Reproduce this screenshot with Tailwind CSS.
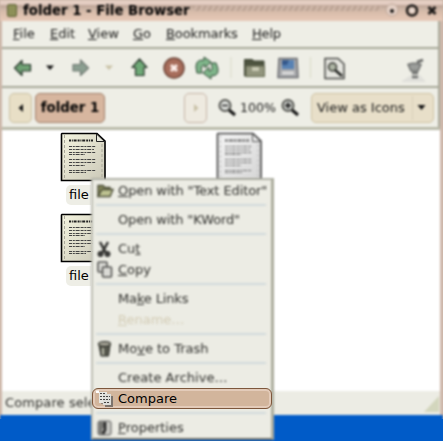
<!DOCTYPE html>
<html lang="en">
<head>
<meta charset="utf-8">
<title>folder 1 - File Browser</title>
<script src="https://cdn.jsdelivr.net/npm/@tailwindcss/browser@4"></script>
</head>
<body class="w-[443px] h-[441px] overflow-hidden bg-[#c9b5a6] text-[13px] font-['DejaVu_Sans',sans-serif] text-[#191918]">
<svg class="absolute w-0 h-0">
  <defs>
    <linearGradient id="paper" x1="0" y1="0" x2="1" y2="1"><stop offset="0" stop-color="#f4f4df"/><stop offset="1" stop-color="#cbc8b8"/></linearGradient>
    <symbol id="doc" viewBox="0 0 46 50">
      <path d="M2 1.500H37L45 9V48.500H1.500V2Z" fill="url(#paper)" stroke="#000" stroke-width="1.600"/>
      <path d="M4.500 3V47M42 12V47" stroke="#aaa99b" stroke-dasharray="3 2"/>
      <path d="M36.500 2V9.500H44.500Z" fill="#e8e8dc" stroke="#222" stroke-width="1"/>
      <path d="M9 8.500H33" stroke="#222" stroke-width="2" stroke-dasharray="2 .8 1 .8 3 1"/>
      <path d="M9 14.500H36M9 17.500H34M9 20.500H36M9 22.500H25M9 27.500H36M9 30.500H36M9 33.500H25M9 38.500H36M9 40.500H26" stroke="#444" stroke-dasharray="3 .8 2 .8 4 1"/>
    </symbol>
  </defs>
</svg>
<div class="relative w-[443px] h-[441px] overflow-hidden">
  <!-- browser window -->
  <div class="flex flex-col w-[443px] h-[441px] blur-[1.3px]">
    <header class="h-[21px] shrink-0 flex items-center bg-[linear-gradient(#dfc9bd_0,#e9d3c8_4px,#b9a092_6px,#c9b3a4_8px,#d8bcaa_12px,#e6c8b6_20px)]">
      <div class="ml-[7px] w-[10px] h-[13px] rounded-xs bg-[#8d9058] border border-[#5d6035]"></div>
      <div class="ml-[6px] w-[170px] font-bold text-[13.300px] leading-5 whitespace-nowrap text-black">folder 1 - File Browser</div>
      <div class="flex-1 h-[5px] -mt-1 bg-[repeating-linear-gradient(120deg,#b9a192_0_2px,#cdb5a6_2px_5px)]"></div>
      <svg class="w-[62px] h-[21px]" fill="none" stroke="#1d1a18"><circle cx="11" cy="10" r="6" stroke="#bca596" fill="#e3cfc4"/><circle cx="11" cy="11" r="1.500" fill="#111"/><circle cx="31" cy="10.500" r="5" stroke-width="2.500"/><circle cx="31" cy="10.500" r="2.500" fill="#eadbd2" stroke="none"/><path d="M47.500 7L54.500 14M54.500 7L47.500 14" stroke-width="2.800"/></svg>
    </header>
    <div class="h-[394px] shrink-0 flex flex-col border-l-2 border-l-[#cdb7aa] border-r-3 border-r-[#cfb9ac] bg-[#eeeee6]">
      <nav class="h-[26px] pl-[11px] flex items-center border-r-2 border-[#a9aa9b] leading-[28px]">
        <span class="w-[37px]"><u>F</u>ile</span><span class="w-[38px]"><u>E</u>dit</span><span class="w-[45px]"><u>V</u>iew</span><span class="w-[33px]"><u>G</u>o</span><span class="w-[86px] tracking-[-0.1px]"><u>B</u>ookmarks</span><span class="tracking-[-0.2px]"><u>H</u>elp</span>
      </nav>
      <div class="h-[39px] border-t-2 border-t-[#a6a797] border-r-2 border-r-[#a9aa9b]">
        <svg class="w-[438px] h-[38px]" viewBox="2 49 438 38" fill="none">
          <g stroke="#27352a" stroke-width="1.200" stroke-linejoin="round">
            <path d="M14.500 68L22 60.500V64.500H30.500V71H22V75.500Z" fill="#6fa174"/>
            <path d="M88.500 68L80.500 60V64.500H73V71H80.500V75.500Z" fill="#8b9f91" stroke="#717a73"/>
            <path d="M139.500 59L147 67.500H144V75.500H135.500V67.500H132Z" fill="#6fa977"/>
          </g>
          <path d="M46 65.500H54L50 70Z" fill="#111"/><path d="M105 65.500H113L109 70Z" fill="#c9c2a6"/>
          <circle cx="174" cy="68" r="10" fill="#a76d5b" stroke="#6f4639" stroke-width="1.500"/>
          <path d="M171 65L177 71M177 65L171 71" stroke="#fff1ed" stroke-width="3"/>
          <g stroke-linejoin="round" stroke="#2f4a35" fill="#7fb58a"><path d="M197 73Q193 59 204 60V57L211 62L205 68V65Q200 65 202 73Z"/>
          <path d="M216 63Q222 76 211 76V79L203 73L209 67V71Q214 71 211 63Z"/></g>
          <path d="M231 57V78M310.500 57V78" stroke="#d9dbc6"/>
          <path d="M244.500 76V59.500H252L254 61H264V76.500Z" fill="#4d533f" stroke="#3a402f"/>
          <path d="M246 66H264.500V76.500H246Z" fill="#92957d" stroke="#666b52"/><path d="M252 67H259V71H252Z" fill="#c9c9b4"/>
          <path d="M279 58.500H297L298 77.500H278Z" fill="#a6a7aa" stroke="#6e6f73" stroke-width="1.500"/><path d="M282 60H294V69H282Z" fill="#5882b4"/><path d="M282 60H289L287 65H282Z" fill="#35598c"/><path d="M282 73H294" stroke="#ddd" stroke-width="3"/>
          <path d="M325 58.500H338L344 64V78.500H325Z" fill="#e5e5df" stroke="#4b4c49" stroke-width="1.500"/><circle cx="332.500" cy="67" r="4" fill="#aeb5a5" stroke="#393a35" stroke-width="1.500"/><path d="M335 70L342 76" stroke="#20211e" stroke-width="2.500"/>
          <path d="M402 81L411 75H420L426 82H402Z" fill="#e0e0db"/>
          <path d="M408 64.500Q414 62 421 64.500L418 71H411Z" fill="#9b9d9a" stroke="#6f716f" stroke-width="1.500"/><path d="M417 62L423 60" stroke="#626462" stroke-width="2.500"/><path d="M412 73H418M412 77H418" stroke="#6f716f" stroke-width="2.500"/>
        </svg>
      </div>
      <div class="h-[41px] flex items-center pt-px pl-[7px] border-t-2 border-t-[#a6a797] border-r-2 border-r-[#a9aa9b]">
        <div class="w-[23px] h-[30px] rounded-[5px] border border-[#cbc1a4] bg-[#e8dfc6] flex items-center justify-center"><svg class="w-2 h-2"><path d="M6 0V8L1.500 4Z" fill="#111"/></svg></div>
        <div class="ml-[3px] w-[70px] h-[30px] rounded-[5px] border border-[#a07f6a] bg-[#d7b69f] flex items-center justify-center font-bold text-black whitespace-nowrap text-[13.300px]">folder 1</div>
        <div class="ml-[79px] w-[23px] h-[30px] rounded-[5px] border border-[#c8b5a8] bg-[#eeeae0] flex items-center justify-center"><svg class="w-2 h-2"><path d="M2 0V8L6.500 4Z" fill="#c8c0a6"/></svg></div>
        <svg class="ml-[10px] w-[20px] h-[20px]" fill="none"><circle cx="8" cy="7.500" r="5.500" fill="#dfe1dd" stroke="#555651" stroke-width="2"/><path d="M5 7.500H11" stroke="#222" stroke-width="1.500"/><path d="M12 12L18 17" stroke="#151515" stroke-width="3"/></svg>
        <span class="ml-[3px] w-[40px] text-[12.600px]">100%</span>
        <svg class="w-[20px] h-[20px]" fill="none"><circle cx="8" cy="7.500" r="5.500" fill="#d2d4d0" stroke="#555651" stroke-width="2"/><path d="M5 7.500H11M8 4.500V10.500" stroke="#222" stroke-width="1.800"/><path d="M12 12L18 17" stroke="#151515" stroke-width="3"/></svg>
        <div class="ml-[11px] w-[123px] h-[30px] rounded-[5px] border border-[#cfc3a3] bg-[#e8dfc9] flex items-center pl-[5px] whitespace-nowrap"><span class="w-[95px]">View as Icons</span><i class="w-px h-[24px] bg-[#d8cfb9]"></i><svg class="ml-[3px] w-3 h-3"><path d="M1.500 3H9.500L5.500 8Z" fill="#151515"/></svg></div>
      </div>
      <main class="h-[264px] bg-white border-t-3 border-[#b9baa9]"></main>
      <footer class="h-[24px] shrink-0 flex items-center justify-between bg-[#ecece4] pl-[3px] text-[#30302d]"><span class="tracking-[0.1px]">Compare sele</span><svg class="w-[16px] h-[24px]"><path d="M0 21L15 5V21Z" fill="#d3d6bd"/></svg></footer>
    </div>
    <div class="h-[26px] shrink-0 bg-[#005bc8]"></div>
  </div>
  <div class="absolute left-0 right-0 bottom-0 h-[22px] bg-[#005bc8]"></div>

  <!-- files on the icon canvas -->
  <svg class="absolute left-[60px] top-[132px] w-[46px] h-[50px]"><use href="#doc"/></svg>
  <div class="absolute left-[66px] top-[185px] w-[25px] h-5 rounded-l-[5px] bg-[#eeeee6] pl-[3px] leading-5 text-black">file</div>
  <svg class="absolute left-[60px] top-[213px] w-[46px] h-[50px]"><use href="#doc"/></svg>
  <div class="absolute left-[66px] top-[266px] w-[25px] h-5 rounded-l-[5px] bg-[#eeeee6] pl-[3px] leading-5 text-black">file</div>
  <svg class="absolute left-[215px] top-[132px] w-[48px] h-[50px] blur-[1.300px] grayscale opacity-75"><use href="#doc"/></svg>

  <!-- context menu -->
  <div class="absolute left-[91px] top-[178px] w-[183px] h-[262px]">
    <div class="absolute inset-0 bg-[#ecece4] border-2 border-t-[#b0b1a6] border-l-[#bdbeb3] border-r-3 border-r-[#acad9d] border-b-[#73746a] blur-[1px]"></div>
    <div class="relative pt-[2px] pl-[5px] pr-[3px] whitespace-nowrap text-[#30302d]">
      <div class="h-[21px] flex items-center blur-[1.3px]"><svg class="w-[22px] h-[20px]"><path d="M2 16V4.500H7L9 6.500H14V9" fill="#85885b" stroke="#4b4d38" stroke-width="1.400"/><path d="M2 15.500L6 8.500H17L14 15.500Z" fill="#bdc291" stroke="#4b4d38" stroke-width="1.400"/></svg><span class="tracking-[-0.1px]"><u>O</u>pen with "Text Editor"</span></div>
      <div class="h-[8px] w-[170px] pt-[3px] blur-[1px]"><div class="h-[2px] bg-[#d2dadb]"></div></div>
      <div class="h-[21px] flex items-center pl-[22px] tracking-[-0.12px] blur-[1.3px]">Open with "KWord"</div>
      <div class="h-[8px] w-[170px] pt-[3px] blur-[1px]"><div class="h-[2px] bg-[#d2dadb]"></div></div>
      <div class="h-[21px] flex items-center blur-[1.3px]"><svg class="w-[22px] h-[20px]" fill="none" stroke="#30302e" stroke-width="2.500"><path d="M4 3L10 14M12 3L6 14"/><circle cx="4.500" cy="15" r="1.700"/><circle cx="11.500" cy="15" r="1.700"/></svg><span>Cu<u>t</u></span></div>
      <div class="h-[21px] flex items-center blur-[1.3px]"><svg class="w-[22px] h-[20px]" fill="#dadad5" stroke="#565654" stroke-width="1.600"><rect x="2" y="2" width="9" height="10" rx="1"/><rect x="6.500" y="7" width="9" height="10" rx="1"/></svg><span><u>C</u>opy</span></div>
      <div class="h-[8px] w-[170px] pt-[3px] blur-[1px]"><div class="h-[2px] bg-[#d2dadb]"></div></div>
      <div class="h-[21px] flex items-center pl-[22px] tracking-[-0.15px] blur-[1.3px]"><span>Ma<u>k</u>e Links</span></div>
      <div class="h-[21px] flex items-center pl-[22px] text-[#d3ccb5] blur-[1.3px]"><span><u>R</u>ename…</span></div>
      <div class="h-[8px] w-[170px] pt-[3px] blur-[1px]"><div class="h-[2px] bg-[#d2dadb]"></div></div>
      <div class="h-[21px] flex items-center blur-[1.3px]"><svg class="w-[22px] h-[20px]"><path d="M3 6H14L12.500 17H5Z" fill="#55564b" stroke="#292a24"/><ellipse cx="8.500" cy="5" rx="6" ry="2.300" fill="#aaa89a" stroke="#30312a" stroke-width="1.300"/><path d="M7 9V16" stroke="#b9b9a9" stroke-width="2"/></svg><span>Mo<u>v</u>e to Trash</span></div>
      <div class="h-[8px] w-[170px] pt-[3px] blur-[1px]"><div class="h-[2px] bg-[#d2dadb]"></div></div>
      <div class="h-[21px] flex items-center pl-[22px] tracking-[0.04px] blur-[1.3px]">Create Archive…</div>
      <div class="h-[21px] -ml-[4px] w-[180px] flex items-center pl-[3px] rounded-[6px] border border-[#7d573c] bg-[#d2b59c] shadow-[inset_0_0_0_2px_#e3cbb9] text-black"><svg class="w-[22px] h-[19px]"><path d="M5 5H12V15H5Z" fill="#8b8078"/><path d="M9 7H17V18H9Z" fill="#7d746d"/><path d="M0 1.500H3V4H0Z" fill="#fff"/><path d="M3 3H11V14H3Z" fill="#e7e7e2"/><path d="M7 5H15V16H7Z" fill="#dededa"/><path d="M4 4.500H10M4 7.500H14M4 10.500H14M8 13.500H14" stroke="#444" stroke-dasharray="2 1"/></svg><span>Compare</span></div>
      <div class="h-[8px] w-[170px] pt-[3px] blur-[1px]"><div class="h-[2px] bg-[#d2dadb]"></div></div>
      <div class="h-[21px] flex items-center blur-[1.3px]"><svg class="w-[22px] h-[20px]"><rect x="2" y="3" width="13" height="14" rx="2" fill="#c9c9c4" stroke="#555"/><path d="M3 4H8V9L6 12L8 16H3Z" fill="#777773"/><path d="M9 4V12L7 16" stroke="#222" stroke-width="2.500" fill="none"/></svg><span><u>P</u>roperties</span></div>
    </div>
  </div>
</div>
</body>
</html>
